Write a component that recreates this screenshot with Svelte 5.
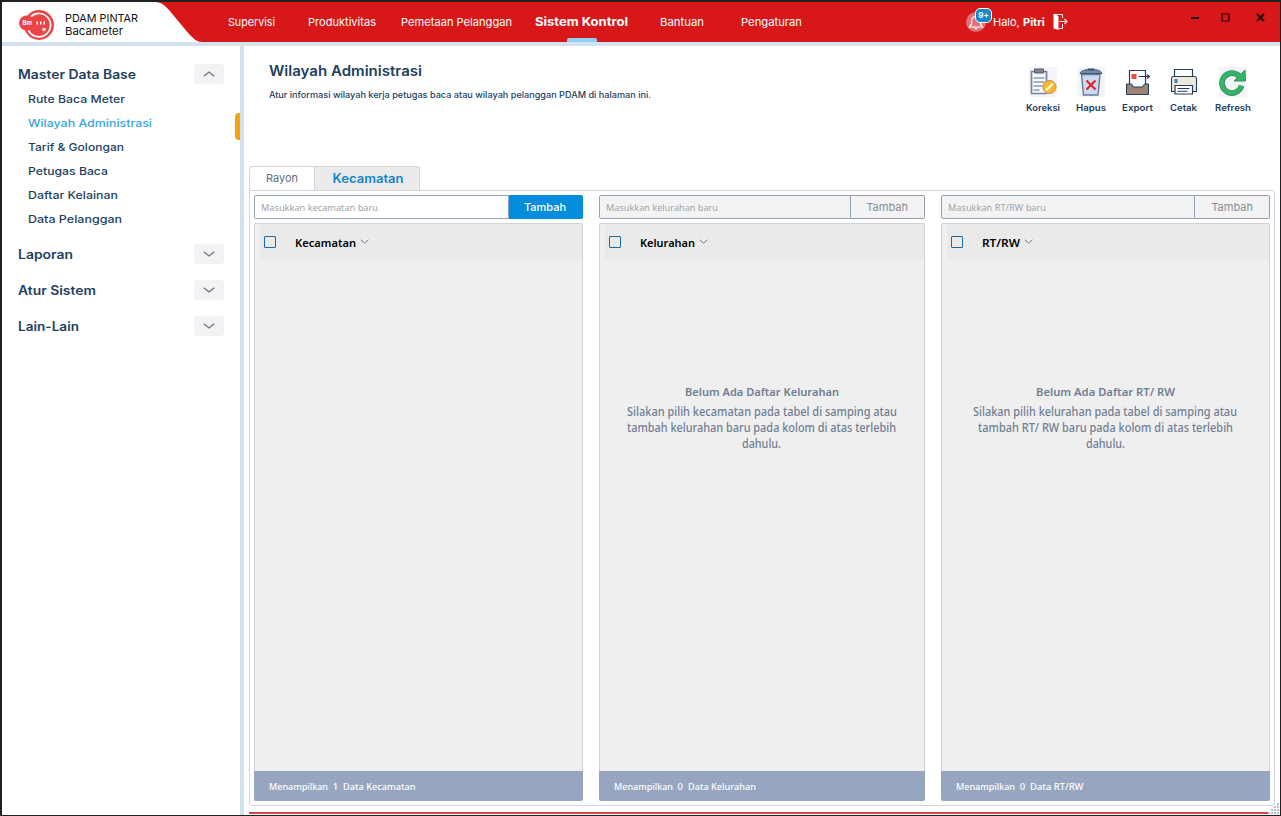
<script>
  const nav = [
    ['Supervisi', 47], ['Produktivitas', 68], ['Pemetaan Pelanggan', 111],
    ['Sistem Kontrol', 93], ['Bantuan', 44], ['Pengaturan', 61]
  ];
  const menu = [
    ['Rute Baca Meter', 97], ['Wilayah Administrasi', 124], ['Tarif & Golongan', 96],
    ['Petugas Baca', 80], ['Daftar Kelainan', 90], ['Data Pelanggan', 94]
  ];
  const groups = [['Laporan', 55], ['Atur Sistem', 78], ['Lain-Lain', 61]];
  const tools = [['Koreksi', 34], ['Hapus', 30], ['Export', 31], ['Cetak', 27], ['Refresh', 36]];
  const columns = [
    { name: 'Kecamatan', w: 61, hint: 'Masukkan kecamatan baru', hw: 117, count: 1, fw: [59, 72.5], active: true },
    {
      name: 'Kelurahan', w: 55, hint: 'Masukkan kelurahan baru', hw: 112, count: 0, fw: [59, 68],
      empty: ['Belum Ada Daftar Kelurahan', 154],
      lines: [['Silakan pilih kecamatan pada tabel di samping atau', 270], ['tambah kelurahan baru pada kolom di atas terlebih', 269], ['dahulu.', 39]]
    },
    {
      name: 'RT/RW', w: 38, hint: 'Masukkan RT/RW baru', hw: 98, count: 0, fw: [59, 53.5],
      empty: ['Belum Ada Daftar RT/ RW', 139],
      lines: [['Silakan pilih kelurahan pada tabel di samping atau', 264], ['tambah RT/ RW baru pada kolom di atas terlebih', 255], ['dahulu.', 39]]
    }
  ];

  // Stretches a label's letters so that it takes the given width.
  function fit(node, width) {
    const natural = node.getBoundingClientRect().width;
    node.style.width = `${width}px`;
    node.style.transform = `scaleX(${width / natural})`;
  }
</script>

{#snippet chevron(up)}
  <svg class="chev" width="12" height="6" viewBox="0 0 12 6"><path d={up ? 'M.8 5.2 6 1l5.2 4.2' : 'M.8.8 6 5 11.2.8'} /></svg>
{/snippet}

<div class="window">
  <header>
    <div class="brand">
      <svg class="brandshape" width="206" height="40" viewBox="0 0 206 40"><path d="M0 0h153c7 0 10 4 14 8l20 24c5 5 8 8 13 8H0z" fill="#fff" /></svg>
      <svg class="logo" width="36" height="32" viewBox="0 0 36 32">
        <circle cx="20" cy="16" r="15" fill="#ec4545" />
        <circle cx="7.500" cy="14" r="7.500" fill="#ec4545" />
        <path d="M12 7.500a11.700 11.700 0 1 1-2.500 14" fill="none" stroke="#fff" stroke-width="1.700" />
        <circle cx="20" cy="15.500" r="9" fill="#ec4545" />
        <text x="3.500" y="16" font-size="6" font-weight="700" fill="#fff" font-family="Inter, sans-serif">Bm</text>
        <path d="M17.500 12.500h1.500v3h-1.500zM21 12.500h1.500v3H21zM24.500 12.500H26v3h-1.500z" fill="#fff" />
        <circle cx="25" cy="20.500" r="1.700" fill="#fff" />
      </svg>
      <div class="brandname"><span use:fit={73}>PDAM PINTAR</span><span use:fit={58}>Bacameter</span></div>
    </div>
    <nav>
      {#each nav as [label, w], i}
        <a class:current={i === 3}><span use:fit={w}>{label}</span></a>
      {/each}
    </nav>
    <div class="user">
      <div class="bell">
        <svg width="20" height="20" viewBox="0 0 20 20">
          <circle cx="10" cy="10" r="10" fill="#e27078" />
          <path d="M3.500 15h13c-2-1.500-2.200-3-2.200-6 0-3-1.800-4.500-4.300-4.500S5.700 6 5.700 9c0 3-.2 4.500-2.200 6z" fill="none" stroke="#fff" stroke-width="1.100" />
          <path d="M8.600 15.500a1.400 1.400 0 0 0 2.800 0" fill="none" stroke="#fff" />
        </svg>
        <b class="badge">9+</b>
      </div>
      <span class="hello" use:fit={25}>Halo,</span><b class="who" use:fit={22}>Pitri</b>
      <svg width="15" height="18" viewBox="0 0 15 18">
        <path d="M1 1.500h8.500V5M9.500 11v4.500H6" fill="none" stroke="#fff" stroke-width="1" />
        <path d="M.5 1 5.500 3v14L.5 15.500z" fill="#fff" />
        <path d="M6.500 8.500H14M11.500 6 14 8.500 11.500 11" fill="none" stroke="#fff" stroke-width="1.100" />
      </svg>
    </div>
    <div class="controls">
      <svg width="8" height="10" viewBox="0 0 8 10"><path d="M0 5h8" /></svg>
      <svg width="9" height="9" viewBox="0 0 9 9"><path d="M1 1h7v7H1z" stroke-width="1.200" /></svg>
      <svg width="9" height="9" viewBox="0 0 9 9"><path d="m1 1 7 7M8 1 1 8" stroke-width="2.100" /></svg>
    </div>
  </header>

  <div class="body">
    <aside>
      <section>
        <h2><span use:fit={118}>Master Data Base</span><button aria-label="Master Data Base">{@render chevron(true)}</button></h2>
        <ul>
          {#each menu as [label, w], i}
            <li class:chosen={i === 1}><span use:fit={w}>{label}</span></li>
          {/each}
        </ul>
      </section>
      {#each groups as [label, w]}
        <h2><span use:fit={w}>{label}</span><button aria-label={label}>{@render chevron(false)}</button></h2>
      {/each}
    </aside>

    <main>
      <div class="top">
        <div class="title">
          <h1><span use:fit={153}>Wilayah Administrasi</span></h1>
          <p><span use:fit={382}>Atur informasi wilayah kerja petugas baca atau wilayah pelanggan PDAM di halaman ini.</span></p>
        </div>
        <div class="tools">
          {#each tools as [label, w], i}
            <div class="tool">
              <svg width="28" height="30" viewBox="0 0 28 30">
                {#if i === 0}
                  <rect width="28" height="30" rx="2" fill="#f3f4f7" />
                  <path d="M2.500 4.500h15v22h-15z" fill="#f7f9fc" stroke="#7486a3" stroke-width="1.700" />
                  <path d="M5.500 2h9v4h-9z" fill="#8e8080" stroke="#485b78" />
                  <path d="M4.500 11h11M4.500 15h11M4.500 19h9M4.500 23h6" stroke="#8a9ab2" stroke-width="1.300" />
                  <circle cx="20.500" cy="20" r="6.600" fill="#f5b52c" stroke="#c39a45" />
                  <path d="m17 23.500 7-7" stroke="#fff3d0" stroke-width="2.500" />
                {:else if i === 1}
                  <rect width="28" height="30" rx="2" fill="#f3f4f7" />
                  <path d="M4.500 7.500h18.500L21 28H6.500z" fill="#ccdaec" stroke="#657a99" stroke-width="1.400" />
                  <path d="M3 6.500c1-3 5-4 11-4s10 1 11 4z" fill="#7589a6" stroke="#405774" />
                  <path d="M11 2.500h6" stroke="#354b68" stroke-width="2" />
                  <path d="m9.500 13.500 9 9m0-9-9 9" stroke="#dd2830" stroke-width="2.200" />
                {:else if i === 2}
                  <path d="M5.500 19V3.500h16V19" fill="#fff" stroke="#213d62" stroke-width="1.200" />
                  <path d="M7.500 7h5v5h-5z" fill="#ed4b3e" />
                  <path d="M14.500 9.500H25M23 7.500l2.500 2L23 11.500" fill="none" stroke="#213d62" stroke-width="1.200" />
                  <path d="M2.500 17h5l2 3h9l2-3h4v10.500h-22z" fill="#9b8574" stroke="#213d62" />
                {:else if i === 3}
                  <path d="M4.500 10V2.500h18V10" fill="#fff" stroke="#213d62" stroke-width="1.200" />
                  <path d="M3 9.500h21.500q2 0 2 2v13h-25v-13q0-2 1.500-2z" fill="#efe8dc" stroke="#213d62" stroke-width="1.100" />
                  <path d="M5 18.500h17.500v8.500H5z" fill="#fff" stroke="#213d62" stroke-width="1.200" />
                  <path d="M7.500 21.500h12M7.500 24.200h10" stroke="#213d62" stroke-width="1.100" />
                  <path d="M4.500 12h3v4h-3z" fill="#2b84bd" />
                {:else}
                  <rect width="28" height="30" rx="2" fill="#f3f4f7" />
                  <path d="M20 8.900A10 10 0 1 0 22.600 18.800" fill="none" stroke="#3e8a6a" stroke-width="5.700" />
                  <path d="m26 3 .5 11H15z" fill="#34b566" stroke="#3e8a6a" />
                  <path d="M20.500 9.400A10 10 0 1 0 22.400 18.700" fill="none" stroke="#34b566" stroke-width="4.200" />
                {/if}
              </svg>
              <span use:fit={w}>{label}</span>
            </div>
          {/each}
        </div>
      </div>

      <div class="tabs">
        <div class="tab"><span use:fit={32}>Rayon</span></div>
        <div class="tab on"><span use:fit={71}>Kecamatan</span></div>
      </div>

      <div class="panel">
        {#each columns as c}
          <div class="col" class:active={c.active}>
            <div class="add">
              <div class="field"><span use:fit={c.hw}>{c.hint}</span></div>
              <button><span use:fit={42}>Tambah</span></button>
            </div>
            <div class="table">
              <div class="thead"><i class="check"></i><b use:fit={c.w}>{c.name}</b>
                <svg class="chev" width="9" height="5" viewBox="0 0 12 6"><path d="M.8.8 6 5 11.2.8" /></svg>
              </div>
              {#if c.empty}
                <div class="empty">
                  <b use:fit={c.empty[1]}>{c.empty[0]}</b>
                  {#each c.lines as [line, w]}<span use:fit={w}>{line}</span>{/each}
                </div>
              {/if}
            </div>
            <footer><span use:fit={c.fw[0]}>Menampilkan</span><em>{c.count}</em><span use:fit={c.fw[1]}>Data {c.name}</span></footer>
          </div>
        {/each}
      </div>
      <div class="bottomline"></div>
      <svg class="grip" width="12" height="12" viewBox="0 0 12 12"><path d="M9 1h2v2H9zM6 4h2v2H6zM9 4h2v2H9zM3 7h2v2H3zM6 7h2v2H6zM9 7h2v2H9zM0 10h2v2H0zM3 10h2v2H3zM6 10h2v2H6zM9 10h2v2H9z" /></svg>
    </main>
  </div>
</div>

<style>
  :global(body) { margin: 0; background: #212124; overflow: hidden; }
  .window, .window * { box-sizing: border-box; }
  .window {
    width: 1281px; height: 816px; border: solid #212124; border-width: 2px 1px 1px 2px;
    background: #fff; display: flex; flex-direction: column;
    font-family: Inter, sans-serif; color: #22415f; font-size: 11px; line-height: 16px;
  }
  span, b { white-space: nowrap; display: inline-block; transform-origin: 0 50%; }
  h1, h2, p, ul { margin: 0; padding: 0; list-style: none; }
  button { border: 0; padding: 0; font: inherit; }
  svg { display: block; flex: none; }
  header { height: 44px; flex: none; background: #d71718; border-bottom: 4px solid #d3e3ed; display: flex; color: #fff; }
  .brand { width: 226px; position: relative; display: flex; padding-left: 17px; color: #111; }
  .brandshape { position: absolute; left: 0; top: 0; }
  .logo { position: relative; margin-top: 7px; }
  .brandname { position: relative; margin: 10px 0 0 10px; display: flex; flex-direction: column; align-items: flex-start; font-size: 11px; line-height: 13px; }
  nav { display: grid; grid-template-columns: 80px 93px 134px 125px 81px 61px; width: 737px; line-height: 40px; }
  nav a { position: relative; }
  .current { font-weight: 700; font-size: 12px; line-height: 39px; }
  .current::after { content: ''; position: absolute; left: 32px; top: 36px; width: 30px; height: 4px; border-radius: 2px 2px 0 0; background: #91cdf5; }
  .user { display: flex; align-items: center; width: 224px; }
  .bell { position: relative; width: 27px; margin-left: 1px; }
  .badge { position: absolute; left: 9px; top: -4px; width: 17px; height: 15px; border: 1.5px solid #fff; border-radius: 5px; background: #1687cb; font-size: 8px; line-height: 12px; text-align: center; }
  .hello { width: 25px; font-size: 11px; }
  .who { width: 22px; margin: 0 8px 0 5px; }
  .controls { display: flex; padding-top: 11px; }
  .controls svg { fill: none; stroke: #250505; stroke-width: 2; }
  .controls svg:nth-child(1) { margin-left: 2px; }
  .controls svg:nth-child(2) { margin-left: 22px; }
  .controls svg:nth-child(3) { margin-left: 26px; }

  .body { flex: 1; min-height: 0; display: flex; }
  aside { width: 242px; flex: none; border-right: 4px solid #d3e3ed; padding-top: 10px; }
  aside h2 { height: 36px; padding: 0 16px; display: flex; align-items: center; justify-content: space-between; font-size: 12.5px; line-height: 18px; font-weight: 600; }
  aside h2 span { padding-top: 1px; }
  aside button { width: 30px; height: 20px; border-radius: 4px; background: #f3f3f6; display: flex; align-items: center; justify-content: center; }
  .chev { fill: none; stroke: #6b7280; stroke-width: 1.2; }
  ul { padding: 0 0 5px 26px; margin-top: -5px; }
  li { height: 24px; line-height: 25px; font-size: 11px; font-weight: 450; position: relative; }
  section { height: 180px; }
  .chosen { color: #38a3dd; }
  .chosen::after { content: ''; position: absolute; right: 0; top: 2px; width: 5px; height: 27px; border-radius: 4px 0 0 4px; background: #f9a20c; }

  main { flex: 1; display: flex; flex-direction: column; padding-left: 5px; position: relative; }
  .top { height: 120px; flex: none; display: flex; justify-content: space-between; }
  .title { padding: 15px 0 0 20px; }
  h1 { font-size: 14px; line-height: 20px; font-weight: 600; }
  p { font-size: 9px; line-height: 14px; margin-top: 7px; font-weight: 500; }
  .tools { display: grid; grid-template-columns: 48px 48px 45px 47px 51px; padding: 21px 22px 0 0; }
  .tool { display: flex; flex-direction: column; align-items: center; font-size: 9px; font-weight: 600; line-height: 12px; gap: 5px; }
  .tabs { display: flex; height: 24px; flex: none; }
  .tab { border: 1px solid #d3d8df; border-bottom: 0; width: 66px; border-radius: 3px 0 0 0; line-height: 23px; text-align: center; color: #5f6d82; }
  .on { width: 106px; margin-left: -1px; padding-right: 2px; border-radius: 0 3px 0 0; background: #ebebeb; color: #1384ce; font-weight: 600; font-size: 12.5px; }
  .panel { height: 616px; flex: none; width: 1026px; border: 1px solid #cdd6e0; border-radius: 0 3px 3px 3px; padding: 4px; display: grid; grid-template-columns: 329px 326.5px 329px; column-gap: 15.7px; }
  .col { display: flex; flex-direction: column; }
  .add { display: flex; height: 24px; margin-bottom: 4px; }
  .field { flex: 1; border: 1px solid #93a3bb; border-radius: 2px 0 0 2px; background: #f3f3f6; padding-left: 6px; font: 9.5px/23px "Noto Sans", sans-serif; color: #a3a3a3; }
  .add button { width: 74.5px; border: 1px solid #999ca3; border-left: 0; border-radius: 0 2px 2px 0; background: #f3f3f6; color: #8d8d91; font-size: 11px; line-height: 22px; }
  .active .field { background: #fff; }
  .active .add button { background: #058ddd; border-color: #058ddd; color: #fff; font-weight: 500; }
  .table { flex: 1; border: 1px solid #d0d5dc; border-bottom: 0; border-radius: 2px 2px 0 0; background: #efefef; padding-left: 5px; }
  .thead { height: 35px; background: #eaeaea; display: flex; align-items: center; padding: 3px 0 0 4px; color: #000; font: 600 11.5px/16px "Noto Sans", sans-serif; }
  .thead b { font-weight: 600; }
  .check { width: 12px; height: 12px; border: 1px solid #1769a8; border-radius: 1px; margin: 0 19px 2px 0; }
  .thead .chev { margin: 0 0 3px 4px; }
  .empty { padding: 125px 5px 0 0; display: flex; flex-direction: column; align-items: center; font: 500 12px/16px "Noto Sans", sans-serif; color: #6f7e94; }
  .empty b { font-size: 11.5px; font-weight: 600; margin-bottom: 4px; }
  footer { height: 30px; border-radius: 0 0 2px 2px; background: #96a6c1; color: #fff; padding-left: 15px; display: flex; font: 500 9.5px/31px "Noto Sans", sans-serif; }
  footer em { font-style: normal; width: 15px; text-align: center; }
  .bottomline { height: 2px; width: 1021px; margin-top: 6px; background: #d3493f; }
  .grip { position: absolute; right: 0; bottom: 1px; fill: #b9bfca; }
</style>
